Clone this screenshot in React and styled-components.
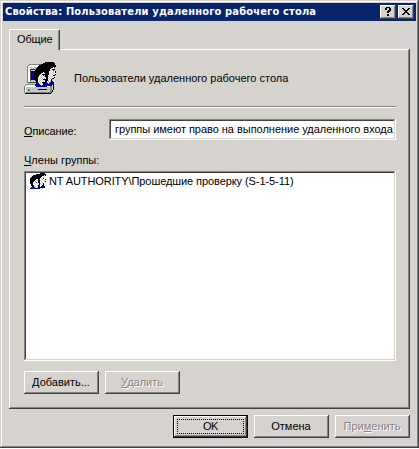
import React from 'react';
import styled, { createGlobalStyle, css } from 'styled-components';

const face = '#d6d3ce';
const mid = '#848284';
const dark = '#424142';

const raised = css`
  box-shadow: inset -1px -1px ${dark}, inset 1px 1px #fff, inset -2px -2px ${mid};
`;
const sunken = css`
  box-shadow: inset -1px -1px #fff, inset 1px 1px ${mid}, inset -2px -2px ${face}, inset 2px 2px ${dark};
`;

const GlobalStyle = createGlobalStyle`
  *, *::before, *::after { box-sizing: border-box; }
  body { margin: 0; background: #fff; overflow: hidden; }
`;

const Dialog = styled.div`
  width: 419px;
  height: 448px;
  padding: 3px;
  background: ${face};
  box-shadow: inset -1px -1px ${dark}, inset 1px 1px ${face}, inset -2px -2px ${mid}, inset 2px 2px #fff;
  color: #000;
  font: 11px/14px 'Liberation Sans', Arial, sans-serif;
  white-space: nowrap;
`;

const TitleBar = styled.header`
  display: flex;
  align-items: center;
  height: 18px;
  padding: 0 2px;
  background: #08246b;
`;

const Title = styled.h1`
  flex: 1;
  margin: 0;
  color: #fff;
  font: bold 11px/14px 'DejaVu Sans Condensed', 'DejaVu Sans', sans-serif;
  letter-spacing: 0.17px;
`;

const CaptionButton = styled.button`
  display: block;
  width: 16px;
  height: 14px;
  margin: 0 0 0 2px;
  padding: 0;
  border: 0;
  background: ${face};
  ${raised}

  svg { display: block; }
`;

const Client = styled.main`
  padding: 8px 6px 0;
`;

const Tab = styled.div`
  position: relative;
  width: 51px;
  height: 21px;
  margin-bottom: -1px;
  padding: 2px 0 0 7px;
  border: solid;
  border-width: 1px 1px 0;
  border-color: #fff ${dark} ${face} #fff;
  border-radius: 2px 2px 0 0;
  box-shadow: inset -1px 0 ${mid};
  background: ${face};
  letter-spacing: -0.15px;
`;

const Panel = styled.section`
  display: flex;
  flex-direction: column;
  width: 401px;
  height: 360px;
  padding: 13px 14px 0 15px;
  ${raised}
`;

const Heading = styled.div`
  display: flex;
  align-items: center;
  gap: 18px;
  height: 32px;

  svg { flex: none; }
`;

const Separator = styled.hr`
  width: 100%;
  height: 2px;
  margin: 12px 0 11px;
  border: 0;
  border-top: 1px solid ${mid};
  border-bottom: 1px solid #fff;
`;

const Field = styled.label`
  display: flex;
  justify-content: space-between;
`;

const FieldLabel = styled.span`
  padding-top: 5px;
  letter-spacing: -0.15px;
`;

const Underlined = styled.span`
  text-decoration: underline;
  text-decoration-thickness: 1px;
  text-underline-offset: 1px;
`;

const TextBox = styled.div`
  width: 287px;
  height: 21px;
  padding: 3px 0 0 6px;
  background: #fff;
  letter-spacing: -0.03px;
  ${sunken}
`;

const ListLabel = styled.div`
  margin-top: 13px;
`;

const List = styled.ul`
  height: 190px;
  margin: 4px 0 10px;
  padding: 2px 6px;
  list-style: none;
  background: #fff;
  ${sunken}
`;

const ListItem = styled.li`
  display: flex;
  align-items: center;
  gap: 3px;
  height: 16px;
  letter-spacing: -0.08px;

  svg { flex: none; }
`;

const ButtonRow = styled.div`
  display: flex;
  justify-content: ${(p) => (p.$end ? 'flex-end' : 'flex-start')};
  gap: 6px;
`;

const DialogButtons = styled(ButtonRow)`
  width: 401px;
  margin-top: 6px;
`;

const Button = styled.button`
  display: flex;
  align-items: center;
  justify-content: center;
  width: 75px;
  height: 23px;
  padding: 0 1px 1px 0;
  border: 0;
  background: ${face};
  color: #000;
  font: inherit;
  ${raised}

  &:disabled {
    color: ${mid};
    text-shadow: 1px 1px #fff;
  }

  ${(p) => p.$default && css`
    padding: 4px;
    border: 1px solid #000;
  `}
`;

const FocusRing = styled.span`
  display: flex;
  align-items: center;
  justify-content: center;
  flex: none;
  width: 67px;
  height: 15px;
  border: 1px dotted #000;
  line-height: 13px;
  letter-spacing: -0.4px;
`;

const palette = { K: '#000', W: '#fff', g: '#c6c3c6', B: '#0000ff', b: '#0000a5' };

/* Draws a bitmap icon: one path per palette colour, one unit square per character. */
function Pixels({ rows, dx = 0 }) {
  return Object.entries(palette).map(([key, fill]) => {
    let d = '';
    rows.forEach((row, y) => {
      [...row].forEach((c, x) => {
        if (c === key) d += `M${x + dx} ${y}h1v1h-1z`;
      });
    });
    return <path key={key} fill={fill} d={d} />;
  });
}

const largeHeads = [
  '...........KKKKKKKKK..',
  '.........KKKKKKKKKKKK.',
  '.......KKKKKKKKKKKKKK.',
  '.....KKKKKKKKKKKKKKKKK',
  '....KKKKKKKKKKKKKKKKKK',
  '...KKKKKKKKKKKKKKKKWK.',
  '..KKKKKKKKKKKKKKKWgWg.',
  '..KKKKKKKKKKKKKKWgKKK.',
  '.KKKKKKKKKKKKKKKgWWBg.',
  '.KKKKKKKKKKKKKKgWgWgWK',
  'KKKKKKKKKWKKKKKWgWgWgK',
  'KKKKKKKgWgWKKKKgWgWgWW',
  'KKKKKKgWKKKKKKKWgWgWgK',
  'KKKKKgWgWBgKKKWgWgWKK.',
  'KKKKKWgWgWgKKKgWgWgWg.',
  'KKKKWgWgWgWgKKWgWgWgK.',
  'KKKKgWgWgWgWKKgWgWKK..',
  '.KKKWgWgWKKKKKWgWK....',
  '.KKKgWgWgWgKKKgWgK....',
  '..KKWgWgWgWKKWgWgbb...',
  '..KKgWgWKKKKbgWgbbbb..',
  '..bbbWgWgKbbbbgbbbbb..',
  '.bbbbbWgWbbbbbbbbbbb..',
  '.bbbbbbgbbbbbbbbbb....',
  '..bbbbbbbbbbb.........',
];

const smallHeads = [
  '..........KKKKK.',
  '......KKKKKKKKKK',
  '...KKKKKKKKKKKWK',
  '..KKKKKKKKKKWWg.',
  '.KKKKKKKKKKWWgW.',
  'KKKKKKKKKKWgWBW.',
  'KKKKKKWWKKWWgWWK',
  'KKKKKWWgKKgWWgWW',
  'KKKKWgWWKKWgWWgK',
  'KKKWWWBWKKWWgWW.',
  'KKKWgWWgWKgWWK..',
  '.KKWWgWWgKWgWK..',
  '.KKKgWWgKKWWbb..',
  '..KKWgWWKbWbbbb.',
  '.bbbbgWgbbbbbbb.',
  'bbbbbbbbbb......',
];

function ComputerUsersIcon() {
  return (
    <svg width="32" height="32" viewBox="0 0 32 32" shapeRendering="crispEdges">
      <path fill="#848284" d="M5 2h12v1H5zM3 4h1v17H3zM4 3h1v1H4z" />
      <path fill="#fff" d="M5 3h11v2H5zM4 4h2v16H4z" />
      <path fill="#c6c3c6" d="M6 5h9v15H6z" />
      <path fill="#424142" d="M6 7h6v1H6zM6 8h1v11H6zM4 20h11v1H4z" />
      <path fill="#0000a5" d="M7 9h5v9H7z" />
      <path fill="#848284" d="M2 22h26v1H2zM0 24h1v7H0zM1 23h1v1H1z" />
      <path fill="#fff" d="M2 23h26v1H2zM1 24h26v1H1zM1 25h1v5H1z" />
      <path fill="#c6c3c6" d="M2 25h24v5H2z" />
      <path fill="#000" d="M1 31h26v1H1zM27 30h1v1h-1zM28 28h1v2h-1zM29 22h1v6h-1zM14 27h9v1h-9z" />
      <path fill="#848284" d="M26 24h2v6h-2zM2 30h25v1H2z" />
      <path fill="#00c300" d="M4 27h2v2H4z" />
      <Pixels rows={largeHeads} dx={10} />
    </svg>
  );
}

function GroupIcon() {
  return (
    <svg width="16" height="16" viewBox="0 0 16 16" shapeRendering="crispEdges">
      <Pixels rows={smallHeads} />
    </svg>
  );
}

function HelpGlyph() {
  return (
    <svg width="16" height="14" viewBox="0 0 16 14" shapeRendering="crispEdges">
      <path d="M6 2h4v1h1v3h-1v1H9v1H7V6h1V5h1V3H7v2H5V3h1zM7 9h2v2H7z" />
    </svg>
  );
}

function CloseGlyph() {
  return (
    <svg width="16" height="14" viewBox="0 0 16 14" shapeRendering="crispEdges">
      <path d="M4 3h2v1h1v1h2V4h1V3h2v1h-1v1h-1v1H9v1h1v1h1v1h1v1h-2V9H9V8H7v1H6v1H4V9h1V8h1V7h1V6H6V5H5V4H4z" />
    </svg>
  );
}

export default function App() {
  return (
    <>
      <GlobalStyle />
      <Dialog>
        <TitleBar>
          <Title>Свойства: Пользователи удаленного рабочего стола</Title>
          <CaptionButton aria-label="Справка"><HelpGlyph /></CaptionButton>
          <CaptionButton aria-label="Закрыть"><CloseGlyph /></CaptionButton>
        </TitleBar>
        <Client>
          <Tab>Общие</Tab>
          <Panel>
            <Heading>
              <ComputerUsersIcon />
              <span>Пользователи удаленного рабочего стола</span>
            </Heading>
            <Separator />
            <Field>
              <FieldLabel><Underlined>О</Underlined>писание:</FieldLabel>
              <TextBox>группы имеют право на выполнение удаленного входа</TextBox>
            </Field>
            <ListLabel><Underlined>Ч</Underlined>лены группы:</ListLabel>
            <List>
              <ListItem>
                <GroupIcon />
                <span>NT AUTHORITY\Прошедшие проверку (S-1-5-11)</span>
              </ListItem>
            </List>
            <ButtonRow>
              <Button><span><Underlined>Д</Underlined>обавить...</span></Button>
              <Button disabled><span><Underlined>У</Underlined>далить</span></Button>
            </ButtonRow>
          </Panel>
          <DialogButtons $end>
            <Button $default><FocusRing>OK</FocusRing></Button>
            <Button>Отмена</Button>
            <Button disabled><span>При<Underlined>м</Underlined>енить</span></Button>
          </DialogButtons>
        </Client>
      </Dialog>
    </>
  );
}
